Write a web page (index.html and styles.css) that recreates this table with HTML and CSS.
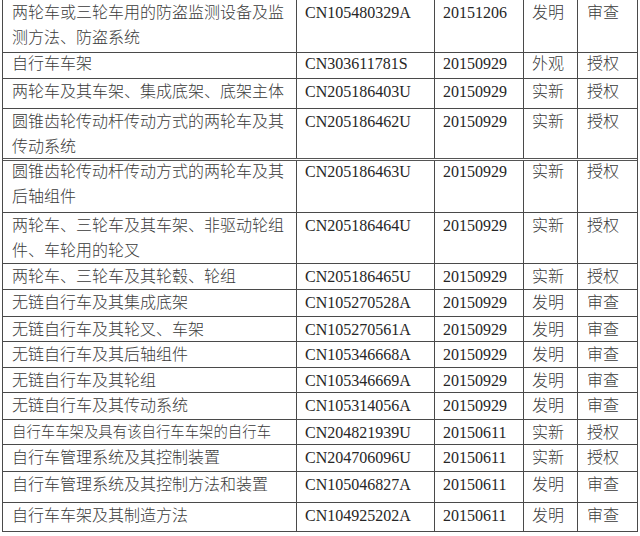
FILE: index.html
```html
<!DOCTYPE html>
<html lang="zh-CN">
<head>
<meta charset="utf-8">
<title>专利列表</title>
<link rel="stylesheet" href="styles.css">
</head>
<body>
<div class="table">
  <div class="row h53"><div class="cell name">两轮车或三轮车用的防盗监测设备及监测方法、防盗系统</div><div class="cell no">CN105480329A</div><div class="cell date">20151206</div><div class="cell type">发明</div><div class="cell state">审查</div></div>
  <div class="row h26 tight"><div class="cell name">自行车车架</div><div class="cell no">CN303611781S</div><div class="cell date">20150929</div><div class="cell type">外观</div><div class="cell state">授权</div></div>
  <div class="row h30"><div class="cell name">两轮车及其车架、集成底架、底架主体</div><div class="cell no">CN205186403U</div><div class="cell date">20150929</div><div class="cell type">实新</div><div class="cell state">授权</div></div>
  <div class="row h52 brk"><div class="cell name">圆锥齿轮传动杆传动方式的两轮车及其传动系统</div><div class="cell no">CN205186462U</div><div class="cell date">20150929</div><div class="cell type">实新</div><div class="cell state">授权</div></div>
  <div class="row h52 tight"><div class="cell name">圆锥齿轮传动杆传动方式的两轮车及其后轴组件</div><div class="cell no">CN205186463U</div><div class="cell date">20150929</div><div class="cell type">实新</div><div class="cell state">授权</div></div>
  <div class="row h51"><div class="cell name">两轮车、三轮车及其车架、非驱动轮组件、车轮用的轮叉</div><div class="cell no">CN205186464U</div><div class="cell date">20150929</div><div class="cell type">实新</div><div class="cell state">授权</div></div>
  <div class="row h26"><div class="cell name">两轮车、三轮车及其轮毂、轮组</div><div class="cell no">CN205186465U</div><div class="cell date">20150929</div><div class="cell type">实新</div><div class="cell state">授权</div></div>
  <div class="row h27"><div class="cell name">无链自行车及其集成底架</div><div class="cell no">CN105270528A</div><div class="cell date">20150929</div><div class="cell type">发明</div><div class="cell state">审查</div></div>
  <div class="row h25"><div class="cell name">无链自行车及其轮叉、车架</div><div class="cell no">CN105270561A</div><div class="cell date">20150929</div><div class="cell type">发明</div><div class="cell state">审查</div></div>
  <div class="row h26"><div class="cell name">无链自行车及其后轴组件</div><div class="cell no">CN105346668A</div><div class="cell date">20150929</div><div class="cell type">发明</div><div class="cell state">审查</div></div>
  <div class="row h25"><div class="cell name">无链自行车及其轮组</div><div class="cell no">CN105346669A</div><div class="cell date">20150929</div><div class="cell type">发明</div><div class="cell state">审查</div></div>
  <div class="row h27"><div class="cell name">无链自行车及其传动系统</div><div class="cell no">CN105314056A</div><div class="cell date">20150929</div><div class="cell type">发明</div><div class="cell state">审查</div></div>
  <div class="row h25"><div class="cell name small">自行车车架及具有该自行车车架的自行车</div><div class="cell no">CN204821939U</div><div class="cell date">20150611</div><div class="cell type">实新</div><div class="cell state">授权</div></div>
  <div class="row h27"><div class="cell name">自行车管理系统及其控制装置</div><div class="cell no">CN204706096U</div><div class="cell date">20150611</div><div class="cell type">实新</div><div class="cell state">授权</div></div>
  <div class="row h31"><div class="cell name">自行车管理系统及其控制方法和装置</div><div class="cell no">CN105046827A</div><div class="cell date">20150611</div><div class="cell type">发明</div><div class="cell state">审查</div></div>
  <div class="row h29 last"><div class="cell name">自行车车架及其制造方法</div><div class="cell no">CN104925202A</div><div class="cell date">20150611</div><div class="cell type">发明</div><div class="cell state">审查</div></div>
</div>
</body>
</html>
```

FILE: styles.css
```css
html, body {
  margin: 0;
  padding: 0;
  background: #ffffff;
}

body {
  padding-left: 2px;
}

.table {
  width: 636px;
  box-sizing: border-box;
  border-left: 1px solid #4a4a4a;
  border-right: 1px solid #4a4a4a;
  font-family: "Liberation Serif", "Noto Sans CJK SC", serif;
  font-size: 16px;
  color: #262626;
}

.row {
  display: grid;
  grid-template-columns: 294px 138px 89px 54px 59px;
  box-sizing: border-box;
  border-bottom: 1px solid #4a4a4a;
  overflow: hidden;
}

.row.brk {
  border-bottom: 3px double #555555;
}

.h25 { height: 25px; }
.h26 { height: 26px; }
.h27 { height: 27px; }
.h29 { height: 29px; }
.h30 { height: 30px; }
.h31 { height: 31px; }
.h51 { height: 51px; }
.h52 { height: 52px; }
.h53 { height: 53px; }

.cell {
  box-sizing: border-box;
  border-right: 1px solid #4a4a4a;
  line-height: 25px;
  padding: 0 4px 0 8px;
  white-space: normal;
}

.row.tight .cell {
  margin-top: -2px;
}

.cell.state {
  border-right: none;
  padding-left: 9px;
}

.cell.name {
  padding-left: 9px;
}

.cell.name,
.cell.type,
.cell.state {
  color: #3a3a3a;
  font-weight: 300;
}

.cell.name.small {
  font-size: 14.4px;
}
```
